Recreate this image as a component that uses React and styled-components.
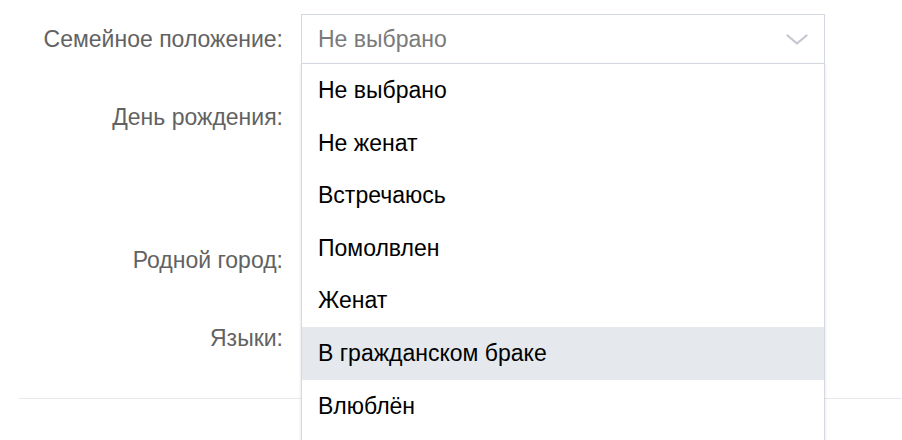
import styled, { createGlobalStyle } from 'styled-components';

const GlobalStyle = createGlobalStyle`
    body {
        margin: 0;
        background: #fff;
        font-family: "Liberation Sans", Arial, sans-serif;
    }
`

const Page = styled.div`
    position: relative;
    width: 902px;
    height: 440px;
    overflow: hidden;
    padding: 14px 0 0 19px;
    box-sizing: border-box;
`
const Row = styled.div`
    display: grid;
    grid-template-columns: 264px 524px;
    column-gap: 18px;
    align-items: start;
    min-height: ${p => p.$height}px;
    margin-bottom: 28px;
`
const Label = styled.div`
    height: 50px;
    line-height: 50px;
    text-align: right;
    font-size: 23px;
    color: #626262;
    white-space: nowrap;
`
const Select = styled.div`
    position: relative;
    height: 50px;
    box-sizing: border-box;
    border: 1px solid #d3d9de;
    display: flex;
    align-items: center;
    justify-content: space-between;
    padding: 0 16px 0 16px;
    font-size: 23px;
    color: #7a7a7a;
`
// margins collapse with the last row, so this is the full gap
const Divider = styled.div`
    height: 1px;
    background: #e7e8ec;
    margin-top: 35px;
`
const Menu = styled.ul`
    position: absolute;
    left: 301px;
    top: 63px;
    width: 524px;
    margin: 0;
    padding: 0;
    list-style: none;
    box-sizing: border-box;
    background: #fff;
    border: 1px solid #d3d9de;
    box-shadow: 0 1px 3px rgba(0, 0, 0, 0.12);
`
const Option = styled.li`
    height: 52.6px;
    line-height: 52.6px;
    padding-left: 16px;
    font-size: 23px;
    color: #000;
    background: ${p => (p.$active ? '#e5e9ee' : '#fff')};
`

const Chevron = () => (
    <svg width="22" height="11" viewBox="0 0 22 11" fill="none">
        <path d="M1.5 1.5 L11 9.5 L20.5 1.5" stroke="#c3c7cf" strokeWidth="2.2" strokeLinecap="round" strokeLinejoin="round" />
    </svg>
)

const options = [
    'Не выбрано',
    'Не женат',
    'Встречаюсь',
    'Помолвлен',
    'Женат',
    'В гражданском браке',
    'Влюблён',
]

const App = () => {
    return (
        <Page>
            <GlobalStyle />
            <Row $height={50}>
                <Label>Семейное положение:</Label>
                <Select>
                    <span>Не выбрано</span>
                    <Chevron />
                </Select>
            </Row>
            <Row $height={115}>
                <Label>День рождения:</Label>
                <div />
            </Row>
            <Row $height={50}>
                <Label>Родной город:</Label>
                <div />
            </Row>
            <Row $height={50}>
                <Label>Языки:</Label>
                <div />
            </Row>
            <Divider />
            <Menu>
                {options.map((o, i) => (
                    <Option key={o} $active={i === 5}>{o}</Option>
                ))}
                <Option />
            </Menu>
        </Page>
    );
}

export default App;
